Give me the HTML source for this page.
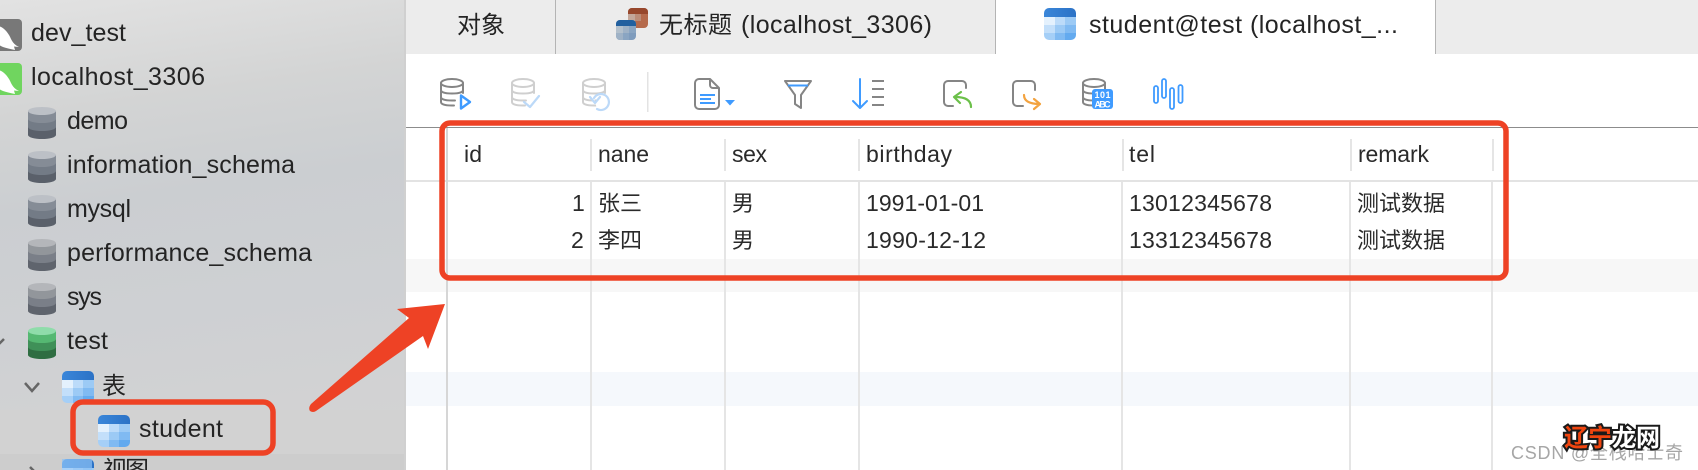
<!DOCTYPE html>
<html><head><meta charset="utf-8"><style>
html,body{margin:0;padding:0;width:1698px;height:470px;overflow:hidden;background:#fff}
svg{display:block;filter:blur(.3px)}
text{font-family:"Liberation Sans","Noto Sans CJK SC",sans-serif;fill:#242424;font-size:25px}
.c{font-family:"Noto Sans CJK SC","Liberation Sans",sans-serif;font-size:24px}
.t text{font-size:23px;fill:#2a2a2a}
.t text.c{font-size:22px}
</style></head><body>
<svg width="1698" height="470" viewBox="0 0 1698 470" xmlns="http://www.w3.org/2000/svg">
<defs>
<linearGradient id="sb" x1="0" y1="0" x2="0.12" y2="1">
<stop offset="0" stop-color="#e2e2e2"/><stop offset=".25" stop-color="#d3d4d4"/><stop offset=".45" stop-color="#cbced1"/><stop offset=".7" stop-color="#ced0d3"/><stop offset="1" stop-color="#d3d3d3"/>
</linearGradient>
<clipPath id="tc"><rect width="32" height="32" rx="5"/></clipPath>
<clipPath id="tc2"><rect width="20" height="20" rx="4"/></clipPath>
<linearGradient id="hd" x1="0" y1="0" x2="1" y2="0"><stop offset="0" stop-color="#3a86d9"/><stop offset="1" stop-color="#2b72c6"/></linearGradient>
<symbol id="tb" width="32" height="32" viewBox="0 0 32 32" overflow="visible"><g clip-path="url(#tc)">
<rect width="32" height="9" fill="url(#hd)"/>
<rect y="9" width="11" height="8" fill="#e4f1fd"/><rect x="11" y="9" width="10" height="8" fill="#bcdbf9"/><rect x="21" y="9" width="11" height="8" fill="#9ccaf5"/>
<rect y="17" width="11" height="8" fill="#c3dffa"/><rect x="11" y="17" width="10" height="8" fill="#9ccaf5"/><rect x="21" y="17" width="11" height="8" fill="#80baf2"/>
<rect y="25" width="11" height="7" fill="#a5cff7"/><rect x="11" y="25" width="10" height="7" fill="#80baf2"/><rect x="21" y="25" width="11" height="7" fill="#63aaef"/>
</g></symbol>
<symbol id="cy" width="28" height="32" viewBox="0 0 28 32" overflow="visible">
<path d="M0 4V28a14 4 0 0 0 28 0V4z" fill="#5a606a"/>
<path d="M0 4V20a14 4 0 0 0 28 0V4z" fill="#737b86"/>
<path d="M0 4V12a14 4 0 0 0 28 0V4z" fill="#858c96"/>
<ellipse cx="14" cy="4" rx="14" ry="4" fill="#bcc0c6"/>
</symbol>
<symbol id="cy2" width="28" height="32" viewBox="0 0 28 32" overflow="visible">
<path d="M0 4V28a14 4 0 0 0 28 0V4z" fill="#5f646d"/>
<path d="M0 4V20a14 4 0 0 0 28 0V4z" fill="#7a7f88"/>
<path d="M0 4V12a14 4 0 0 0 28 0V4z" fill="#92969b"/>
<ellipse cx="14" cy="4" rx="14" ry="4" fill="#b4b6ba"/>
</symbol>
<symbol id="dbo" width="24" height="30" viewBox="0 0 24 30" overflow="visible">
<g fill="none" stroke-width="2" stroke-linecap="round">
<ellipse cx="12" cy="5" rx="11" ry="4"/>
<path d="M1 5V24C1 26.5 6 27.5 12 27.5H14M23 5V15M1 12C1 14.5 6 15.5 12 15.5S23 14.5 23 12M1 19C1 21.5 6 22.5 12 22.5H15"/>
</g></symbol>
</defs>

<!-- main area -->
<rect x="406" y="54" width="1292" height="416" fill="#fff"/>
<rect x="406" y="259" width="1292" height="33" fill="#f7f7f7"/>
<rect x="406" y="372" width="1292" height="34" fill="#f5f8fc"/>

<!-- toolbar line + header -->
<rect x="406" y="127" width="1292" height="1" fill="#8c8c8c"/>
<rect x="406" y="180" width="1292" height="2" fill="#e3e3e3"/>
<g fill="#e5e5e5">
<rect x="446" y="128" width="2" height="342" fill="#d6d6d6"/>
<rect x="590" y="182" width="2" height="288"/><rect x="724" y="182" width="2" height="288"/><rect x="858" y="182" width="2" height="288"/><rect x="1121" y="182" width="2" height="288"/><rect x="1349" y="182" width="2" height="288"/><rect x="1491" y="182" width="2" height="288"/>
<rect x="590" y="139" width="2" height="32"/><rect x="724" y="139" width="2" height="32"/><rect x="858" y="139" width="2" height="32"/><rect x="1122" y="139" width="2" height="32"/><rect x="1350" y="139" width="2" height="32"/><rect x="1492" y="139" width="2" height="32"/>
</g>

<!-- table text -->
<g class="t">
<text x="464" y="162" textLength="18">id</text>
<text x="598" y="162" textLength="51">nane</text>
<text x="732" y="162" textLength="35">sex</text>
<text x="866" y="162" textLength="86">birthday</text>
<text x="1129" y="162" textLength="26">tel</text>
<text x="1358" y="162" textLength="71">remark</text>
<text x="572" y="211" textLength="10">1</text>
<text x="571" y="248" textLength="12">2</text>
<text class="c" x="598" y="211" textLength="44">张三</text>
<text class="c" x="598" y="248" textLength="44">李四</text>
<text class="c" x="732" y="211">男</text>
<text class="c" x="732" y="248">男</text>
<text x="866" y="211" textLength="118">1991-01-01</text>
<text x="866" y="248" textLength="120">1990-12-12</text>
<text x="1129" y="211" textLength="143">13012345678</text>
<text x="1129" y="248" textLength="143">13312345678</text>
<text class="c" x="1357" y="211" textLength="88">测试数据</text>
<text class="c" x="1357" y="248" textLength="88">测试数据</text>
</g>

<!-- tab bar -->
<rect x="406" y="0" width="1292" height="54" fill="#ececec"/>
<rect x="996" y="0" width="440" height="54" fill="#fff"/>
<rect x="555" y="0" width="1" height="54" fill="#b4b4b4"/>
<rect x="995" y="0" width="1" height="54" fill="#b4b4b4"/>
<rect x="1435" y="0" width="1" height="54" fill="#b4b4b4"/>
<text class="c" x="457" y="33" textLength="48">对象</text>
<g transform="translate(628,8)"><g clip-path="url(#tc2)"><rect width="20" height="20" fill="#b56a4c"/><rect width="20" height="6" fill="#97472c"/><rect y="6" width="7" height="7" fill="#c3a79a"/><rect x="7" y="6" width="6" height="7" fill="#bb8c78"/><rect y="13" width="7" height="7" fill="#b7856f"/></g></g>
<g transform="translate(616,20)"><g clip-path="url(#tc2)"><rect width="20" height="20" fill="#7f9cbd"/><rect width="20" height="6" fill="#22609f"/><rect y="6" width="7" height="7" fill="#b3c0cc"/><rect x="7" y="6" width="6" height="7" fill="#9fb2c6"/><rect x="13" y="6" width="7" height="7" fill="#8aa5c2"/><rect y="13" width="7" height="7" fill="#9fb2c6"/><rect x="7" y="13" width="6" height="7" fill="#8aa5c2"/></g></g>
<text class="c" x="659" y="33" textLength="73">无标题</text>
<text x="741" y="33" textLength="191">(localhost_3306)</text>
<use href="#tb" x="1044" y="8"/>
<text x="1089" y="33" textLength="309">student@test (localhost_...</text>

<!-- toolbar icons -->
<use href="#dbo" x="440" y="78" stroke="#858585"/>
<path d="M461 95.5L470 102L461 108.5Z" fill="#fff" stroke="#3f9bff" stroke-width="2.4" stroke-linejoin="round"/>
<use href="#dbo" x="511" y="78" stroke="#cfcfcf"/>
<path d="M524 102L530 107L539 96" fill="none" stroke="#bcd9f8" stroke-width="2.2" stroke-linecap="round" stroke-linejoin="round"/>
<use href="#dbo" x="582" y="78" stroke="#cfcfcf"/>
<path d="M594 98A8 8 0 1 1 597 109M590 97L595 103L600 97" fill="#fff" stroke="#bcd9f8" stroke-width="2.2" stroke-linecap="round" stroke-linejoin="round"/>
<rect x="647" y="72" width="1.5" height="40" fill="#e3e3e3"/>
<path d="M710 79H699A4 4 0 0 0 695 83V105A4 4 0 0 0 699 109H715A4 4 0 0 0 719 105V88ZM710 79V85A3 3 0 0 0 713 88H719" fill="none" stroke="#858585" stroke-width="2" stroke-linejoin="round"/>
<path d="M700 95H715M700 99H711M700 103H715" stroke="#3f9bff" stroke-width="2" fill="none"/>
<path d="M725 100H735L730 105.500Z" fill="#3f9bff"/>
<path d="M785 81H811L801 95V108L795 104V95Z" fill="none" stroke="#858585" stroke-width="2" stroke-linejoin="round"/>
<path d="M788 85.500H808" stroke="#3f9bff" stroke-width="2"/>
<path d="M860 79V108M853 101L860 108L867 101" fill="none" stroke="#3f9bff" stroke-width="2" stroke-linecap="round" stroke-linejoin="round"/>
<path d="M872 81H884M872 89H884M872 97H884M872 105H884" stroke="#858585" stroke-width="2"/>
<path d="M966 88V85A4 4 0 0 0 962 81H948A4 4 0 0 0 944 85V102A4 4 0 0 0 948 106H953" fill="none" stroke="#858585" stroke-width="2" stroke-linecap="round"/>
<path d="M971 107C971 100 965 97 955 97M961 92L954 97L960 103" fill="none" stroke="#6cc04a" stroke-width="2.2" stroke-linecap="round" stroke-linejoin="round"/>
<path d="M1035 90V85A4 4 0 0 0 1031 81H1017A4 4 0 0 0 1013 85V102A4 4 0 0 0 1017 106H1023" fill="none" stroke="#858585" stroke-width="2" stroke-linecap="round"/>
<path d="M1024 95C1024 101 1029 104 1040 104M1034 99L1040 104L1034 109" fill="none" stroke="#f3a33f" stroke-width="2.2" stroke-linecap="round" stroke-linejoin="round"/>
<use href="#dbo" x="1082" y="78" stroke="#858585"/>
<rect x="1092" y="89" width="21" height="20" rx="3" fill="#3f9bff"/>
<text x="1102.500" y="98" text-anchor="middle" style="font-size:9px;font-weight:bold;fill:#fff" textLength="16">101</text>
<text x="1102.500" y="107.500" text-anchor="middle" style="font-size:9px;font-weight:bold;fill:#fff" textLength="16">ABC</text>
<g fill="none" stroke="#3f9bff" stroke-width="1.8">
<rect x="1154" y="86" width="4" height="17" rx="2"/><rect x="1162" y="79" width="4" height="19" rx="2"/><rect x="1170" y="88" width="4" height="21" rx="2"/><rect x="1178.500" y="85" width="4" height="18" rx="2"/>
</g>

<!-- sidebar -->
<rect x="0" y="0" width="406" height="470" fill="url(#sb)"/>
<rect x="404" y="0" width="2" height="470" fill="#d0d0d0"/>
<rect x="0" y="410" width="404" height="44" fill="#d2d2d2"/>
<rect x="0" y="454" width="404" height="16" fill="#cdcdcd"/>

<rect x="-8" y="19" width="30" height="32" rx="4" fill="#787878"/>
<path d="M-2 26C4 27 9 34 11 39C13 43 15 45 19 47L14 46.500L15 50C10 49 6 48 3 47C0 46 -2 44 -2 44Z" fill="#fff"/>
<rect x="-8" y="63" width="30" height="32" rx="4" fill="#70d55f"/>
<path d="M-2 70C4 71 9 78 11 83C13 87 15 89 19 91L14 90.500L15 94C10 93 6 92 3 91C0 90 -2 88 -2 88Z" fill="#fff"/>
<text x="31" y="41" textLength="95">dev_test</text>
<text x="31" y="85" textLength="174">localhost_3306</text>

<use href="#cy" x="28" y="107"/><text x="67" y="129" textLength="61">demo</text>
<use href="#cy" x="28" y="151"/><text x="67" y="173" textLength="228">information_schema</text>
<use href="#cy" x="28" y="195"/><text x="67" y="217" textLength="64">mysql</text>
<use href="#cy2" x="28" y="239"/><text x="67" y="261" textLength="245">performance_schema</text>
<use href="#cy2" x="28" y="283"/><text x="67" y="305" textLength="35">sys</text>
<path d="M28 331V355a14 4 0 0 0 28 0V331z" fill="#2f6d42"/>
<path d="M28 331V347a14 4 0 0 0 28 0V331z" fill="#3f9058"/>
<path d="M28 331V339a14 4 0 0 0 28 0V331z" fill="#55b872"/>
<ellipse cx="42" cy="331" rx="14" ry="4" fill="#8fdcaa"/>
<text x="67" y="349" textLength="41">test</text>
<path d="M-4 339L0 343L4 339" fill="none" stroke="#666" stroke-width="2.500"/>
<path d="M25 383L32 391L39 383" fill="none" stroke="#666" stroke-width="2.500"/>
<use href="#tb" x="62" y="371"/>
<text class="c" x="102" y="394">表</text>
<use href="#tb" x="98" y="415"/>
<text x="139" y="437" textLength="84">student</text>
<path d="M30 467L36 473L30 479" fill="none" stroke="#666" stroke-width="2.500"/>
<use href="#tb" x="62" y="459"/>
<rect x="62" y="459" width="30" height="11" fill="#8dc2f5" opacity=".7"/>
<text class="c" x="103" y="478" textLength="46">视图</text>

<!-- annotations -->
<rect x="442" y="123" width="1064" height="155" rx="8" fill="none" stroke="#ee4225" stroke-width="5.500"/>
<rect x="73" y="402" width="200" height="51" rx="10" fill="none" stroke="#ee4225" stroke-width="5.500"/>
<path d="M445 304L397 309L409 318L311 404Q308 408 310 411Q313 413 316 411L423 336L428 349Z" fill="#ee4225"/>

<!-- watermark -->
<text x="1511" y="459" textLength="172" style="font-size:18px;fill:#a6a6a6">CSDN @全栈哈士奇</text>
<text class="c" x="1564" y="446" textLength="48" style="font-size:24px;font-weight:bold;fill:#f0450f;stroke:#1a1a1a;stroke-width:4;paint-order:stroke">辽宁</text>
<text class="c" x="1612" y="446" textLength="48" style="font-size:24px;font-weight:bold;fill:#fff;stroke:#1a1a1a;stroke-width:4;paint-order:stroke">龙网</text>
</svg>
</body></html>
